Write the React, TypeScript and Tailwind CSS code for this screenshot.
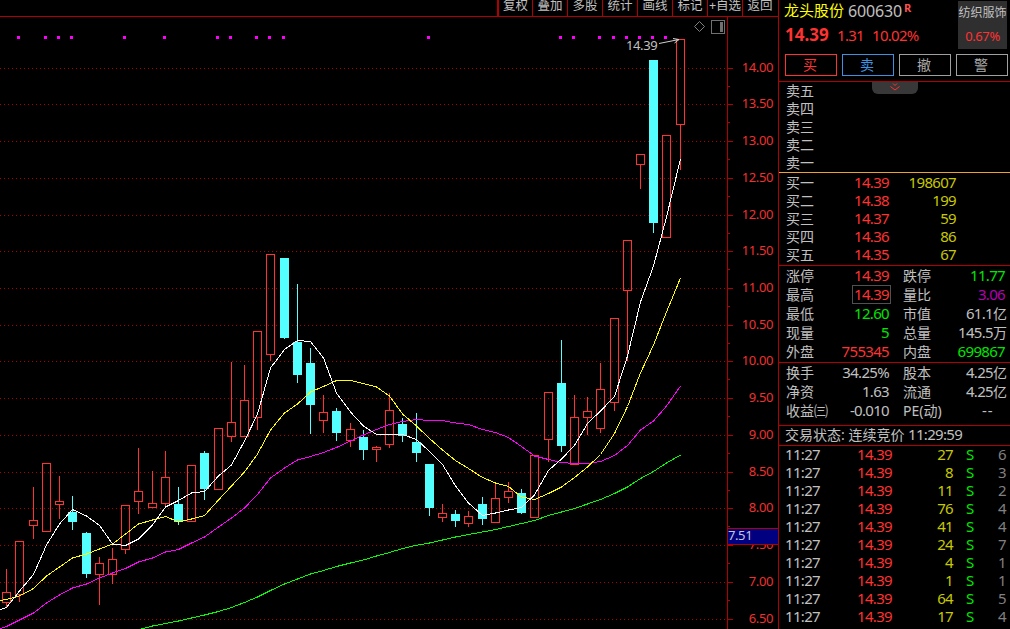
import React from 'react'

const RED = '#ff3232'
const CYAN = '#54ffff'
const LINE = '#b00000'

// [center x, high, body top, body bottom, low, is falling]
const candles = [
  [6, 569, 592, 602, 607, 0], [19, 541, 541, 594, 601, 0], [33, 487, 520, 525, 538, 0],
  [46, 463, 463, 531, 531, 0], [59, 476, 501, 504, 518, 0], [72, 496, 512, 521, 529, 1],
  [86, 532, 533, 573, 577, 1], [99, 557, 563, 574, 604, 0], [112, 548, 559, 574, 583, 0],
  [125, 505, 505, 549, 553, 0], [138, 448, 491, 501, 513, 0], [152, 471, 503, 507, 507, 0],
  [165, 451, 477, 503, 507, 0], [178, 487, 504, 521, 524, 1], [191, 465, 465, 521, 521, 0],
  [204, 451, 453, 488, 499, 1], [218, 428, 428, 489, 489, 0], [231, 362, 422, 436, 441, 0],
  [244, 365, 400, 436, 436, 0], [257, 331, 331, 417, 429, 0], [270, 254, 254, 354, 360, 0],
  [284, 258, 258, 337, 338, 1], [297, 284, 342, 374, 382, 1], [310, 348, 363, 404, 433, 1],
  [323, 395, 412, 420, 432, 0], [336, 408, 411, 432, 440, 1], [350, 423, 429, 440, 446, 0],
  [363, 430, 437, 449, 459, 1], [376, 446, 447, 449, 461, 0], [389, 393, 410, 444, 447, 0],
  [402, 418, 424, 435, 441, 1], [416, 413, 442, 452, 461, 1], [429, 464, 464, 507, 515, 1],
  [442, 504, 513, 517, 521, 0], [455, 510, 514, 520, 526, 1], [468, 511, 516, 523, 526, 0],
  [482, 497, 504, 518, 524, 1], [495, 483, 498, 522, 522, 0], [508, 482, 491, 497, 502, 0],
  [521, 489, 493, 512, 513, 1], [534, 455, 455, 517, 517, 0], [548, 392, 392, 439, 461, 0],
  [561, 340, 383, 445, 451, 1], [574, 395, 417, 464, 464, 0], [587, 397, 411, 417, 434, 0],
  [600, 363, 389, 428, 432, 0], [614, 318, 318, 402, 410, 0], [627, 240, 240, 290, 360, 0],
  [640, 154, 154, 164, 188, 0], [653, 60, 60, 222, 232, 1], [666, 135, 135, 237, 237, 0],
  [680, 39, 39, 124, 169, 0],
]

const averages = [
  { color: '#00ff00', points: '141,629 152,626 165,623.5 178,621 191,618 204,615 218,611.5 231,607.5 244,602.5 257,597 270,590.5 284,584 297,579 310,574 323,570.5 336,566.5 350,563 363,560 376,556 389,552.5 402,548.5 415,545.5 429,543 442,540 455,537 468,534.5 482,532 495,529.5 508,526.5 521,523.5 534,520.5 548,515.5 561,512 574,508.5 587,504 600,499.5 614,493.5 627,487 640,478.5 653,471.5 666,463 680,455' },
  { color: '#ff00ff', points: '0,628.5 6,626.5 19,620 33,613 46,603 59,595 72,588 86,584 99,578 112,573 125,568.5 138,562 152,558 165,552 178,549.5 191,543 204,537 218,527 231,518 244,508 257,494.5 270,478 284,468 297,460 310,456.5 323,452.5 336,447.5 350,441 363,435 376,429.5 389,424.5 402,421.5 416,419.5 429,420.5 442,420.5 455,423 468,424.5 482,429.5 495,432.5 508,437.5 521,446.5 534,456 548,459.5 561,462.5 574,463.5 587,463.5 600,461.5 614,455.5 627,445.5 640,430 653,421 666,406 680,386' },
  { color: '#ffff00', points: '0,600.5 6,599.5 19,596 33,588.5 46,576 59,567 72,558 86,554 99,549 112,544 125,534 138,524 152,520 165,516.5 178,522 191,519 204,515.5 218,500 231,486 244,472 257,454 270,430 284,413 297,404 310,392 323,386.5 336,380.5 350,380.5 363,383.5 376,387 389,396 402,414 416,426 429,438.5 442,450 455,460.5 468,468.5 482,477.5 495,483 508,486.5 521,497 534,499.5 548,493.5 561,487 574,477.5 587,467 600,454.5 614,433.5 627,406.5 640,373 653,345 666,312 680,278' },
  { color: '#ffffff', points: '0,609.5 6,607.5 19,591 33,574.5 46,545 59,524 72,509.5 86,516 99,525.5 112,544 125,545.5 138,539 152,525 165,507 178,500.5 191,493 204,491.5 218,476 231,465 244,441 257,414 270,368 284,349.5 297,340.5 310,341.5 323,358 336,393 350,412 363,426 376,434.5 389,434.5 402,434.5 416,439.5 429,451.5 442,464.5 455,486 468,503 482,515.5 495,513 508,510 521,507.5 534,495 548,470.5 561,459 574,445.5 587,423.5 600,411 614,396.5 627,356 640,302 653,266 666,217 680,159' },
]

const marks = [17, 44, 57, 70, 123, 163, 216, 229, 255, 268, 282, 427, 559, 572, 598, 612, 625, 638, 651, 664]

const gridRows: [number, string][] = [
  [68, '14.00'], [104, '13.50'], [141, '13.00'], [178, '12.50'], [215, '12.00'], [251, '11.50'],
  [288, '11.00'], [325, '10.50'], [361, '10.00'], [398, '9.50'], [435, '9.00'], [472, '8.50'],
  [508, '8.00'], [545, '7.50'], [582, '7.00'], [619, '6.50'],
]

const tools = ['复权', '叠加', '多股', '统计', '画线', '标记', '+自选', '返回']

const sells = ['卖五', '卖四', '卖三', '卖二', '卖一']

const buys = [
  ['买一', '14.39', '198607'],
  ['买二', '14.38', '199'],
  ['买三', '14.37', '59'],
  ['买四', '14.36', '86'],
  ['买五', '14.35', '67'],
]

const stats = [
  ['涨停', '14.39', 'text-[#ff3232]', '跌停', '11.77', '', 'text-[#00e600]'],
  ['最高', '14.39', 'text-[#ff3232]', '量比', '3.06', '', 'text-[#b400b4]'],
  ['最低', '12.60', 'text-[#00e600]', '市值', '61.1', '亿', ''],
  ['现量', '5', 'text-[#00e600]', '总量', '145.5', '万', ''],
  ['外盘', '755345', 'text-[#ff3232]', '内盘', '699867', '', 'text-[#00e600]'],
]

const funds = [
  ['换手', '34.25%', '', '股本', '4.25', '亿', ''],
  ['净资', '1.63', '', '流通', '4.25', '亿', ''],
  ['收益㈢', '-0.010', '', 'PE(动)', '--', '', ''],
]

const trades = [
  ['27', '6'], ['8', '3'], ['11', '2'], ['76', '4'], ['41', '4'],
  ['24', '7'], ['4', '1'], ['1', '1'], ['64', '5'], ['17', '4'],
]

function Num({ children, className = 'tracking-[-0.68px]' }: { children: React.ReactNode; className?: string }) {
  return <span className={`text-[15px] ${className}`}>{children}</span>
}

function Toolbar() {
  return (
    <div className="flex h-[17px] shrink-0 justify-end border-b border-[#b00000]">
      <div className="flex border-l-2 border-[#b00000]">
        {tools.map((t, i) => (
          <div
            key={t}
            className={`flex h-4 items-center justify-center whitespace-nowrap pb-[5px] text-[12.5px] leading-[11px] ${i === 0 ? 'w-[33px]' : 'w-[35px] border-l border-[#b00000]'}`}
          >
            {t}
          </div>
        ))}
        <div className="w-px" />
      </div>
    </div>
  )
}

function Chart() {
  return (
    <svg width="778" height="612" viewBox="0 17 778 612" className="block" shapeRendering="crispEdges">
      {gridRows.map(([y]) => (
        <line key={y} x1="0" x2="727" y1={y + 0.5} y2={y + 0.5} stroke={LINE} strokeDasharray="1 3" />
      ))}

      {candles.map(([x, high, top, bottom, low, down]) => (
        <g key={x} fill={down ? CYAN : RED}>
          <rect x={x} y={high} width="1" height={top - high} />
          <rect x={x} y={bottom} width="1" height={low - bottom + 1} />
          {down ? (
            <rect x={x - 4} y={top} width="9" height={bottom - top + 1} />
          ) : (
            <rect x={x - 3.5} y={top + 0.5} width="8" height={bottom - top} fill="none" stroke={RED} />
          )}
        </g>
      ))}

      {averages.map((a) => (
        <polyline key={a.color} points={a.points} transform="translate(0.5 0)" fill="none" stroke={a.color} />
      ))}

      {marks.map((x) => (
        <rect key={x} x={x} y="36" width="3" height="3" fill="#ff00ff" />
      ))}

      {/* high marker */}
      <text x="626" y="50" fontSize="13" letterSpacing="-0.4" fill="#c0c0c0">14.39</text>
      <path d="M659 43.5L679 39.5M673 38.5L679 39.5L674.5 43" fill="none" stroke="#d0d0d0" shapeRendering="auto" />

      {/* layout toggles */}
      <path d="M699.5 21.5L704.5 26.5L699.5 31.5L694.5 26.5Z" fill="none" stroke="#808080" shapeRendering="auto" />
      <rect x="711.5" y="20.5" width="13" height="13" fill="none" stroke="#707070" />
      <rect x="720" y="22" width="3" height="10" fill="#707070" />

      {/* price axis */}
      <rect x="727" y="17" width="1" height="612" fill={LINE} />
      {gridRows.map(([y, label], i) => (
        <g key={label}>
          <rect x="728" y={y} width="5" height="1" fill={LINE} />
          {i < gridRows.length - 1 && (
            <rect x="728" y={Math.floor((y + gridRows[i + 1][0]) / 2)} width="2" height="1" fill={LINE} />
          )}
          <text x="773" y={y + 4} fontSize="13" letterSpacing="-0.4" textAnchor="end" fill="#f03030">{label}</text>
        </g>
      ))}
      <rect x="728" y="528" width="50" height="17" fill={LINE} />
      <rect x="728" y="529" width="50" height="15" fill="#000080" />
      <text x="728" y="540" fontSize="13" letterSpacing="-0.4" fill="#c8c8d8">7.51</text>
    </svg>
  )
}

function Header() {
  return (
    <div className="flex h-[81px] shrink-0 flex-col">
      <div className="flex h-[54px] justify-between pl-[5px] pr-[3px]">
        <div>
          <div className="flex h-[21px] items-center whitespace-nowrap">
            <span className="w-16 text-[15px] text-[#ffff00]">龙头股份</span>
            <span className="text-[16px] tracking-[-0.15px]">600630</span>
            <span className="ml-[2px] pb-1 text-[11px] font-bold text-[#ff5050]">R</span>
          </div>
          <div className="flex h-[28px] items-center whitespace-nowrap pl-px text-[#ff3232]">
            <span className="w-[52px] text-[17px] font-bold">14.39</span>
            <span className="w-[35px] text-[15px] tracking-[-0.7px]">1.31</span>
            <span className="text-[15px] tracking-[-0.7px]">10.02%</span>
          </div>
        </div>
        <div className="mt-px flex h-12 w-[49px] flex-col items-center bg-[#2f2f30] text-[12px]">
          <div className="flex h-6 items-center whitespace-nowrap">纺织服饰</div>
          <div className="flex h-6 items-center text-[13px] tracking-[-0.4px] text-[#ff3232]">0.67%</div>
        </div>
      </div>
      <div className="flex gap-[5px] pl-[6px] text-[14px] text-[#a8a8a8]">
        <div className="flex h-[22px] w-[52px] items-center justify-center border border-[#ff3232] pb-0.5 pr-0.5 text-[#ff3232]">买</div>
        <div className="flex h-[22px] w-[52px] items-center justify-center border border-[#4090e0] pb-0.5 pr-0.5 text-[#4090e0]">卖</div>
        <div className="flex h-[22px] w-[52px] items-center justify-center border border-[#a0a0a0] pb-0.5 pr-0.5">撤</div>
        <div className="flex h-[22px] w-[52px] items-center justify-center border border-[#a0a0a0] pb-0.5 pr-0.5">警</div>
      </div>
    </div>
  )
}

function StatRow({ row, boxed = false }: { row: string[]; boxed?: boolean }) {
  const [label, value, color, label2, value2, unit, color2] = row
  return (
    <div className="flex h-[19px] items-center whitespace-nowrap">
      <span className="w-[50px]">{label}</span>
      <div className={`flex w-[53px] justify-end ${color}`}>
        <Num className={boxed ? 'mr-[-2px] border border-[#505050] pl-px pr-px leading-[17px] tracking-[-0.68px]' : 'tracking-[-0.68px]'}>{value}</Num>
      </div>
      <span className="ml-[14px] w-[50px]">{label2}</span>
      {value2 === '--' ? (
        <Num className="ml-[29px] tracking-[0.9px]">{value2}</Num>
      ) : (
        <div className={`flex items-center justify-end ${color2} ${unit ? 'w-[54px]' : 'w-[52px]'}`}>
          <Num>{value2}</Num>
          {unit}
        </div>
      )}
    </div>
  )
}

export default function App() {
  return (
    <div className="flex h-[629px] w-[1010px] overflow-hidden bg-black font-['Noto_Sans','Noto_Sans_CJK_SC',sans-serif] text-[#c0c0c0]">
      <div className="flex w-[778px] shrink-0 flex-col">
        <Toolbar />
        <Chart />
      </div>

      <div className="flex w-[232px] shrink-0 flex-col border-l border-[#b00000] text-[14px]">
        <Header />

        <div className="relative h-[91px] shrink-0 border-t border-[#b00000] pl-[7px]">
          {sells.map((s) => (
            <div key={s} className="flex h-[18px] items-center pb-0.5">{s}</div>
          ))}
          <div className="absolute left-[93px] top-0 flex h-3 w-[46px] justify-center rounded-b-md bg-[#383838] pr-px">
            <svg width="10" height="10" viewBox="0 0 10 10" fill="none" stroke="#ff3232">
              <path d="M3 1.5L5 3.5L7 1.5M0.5 4.5L5 8L9.5 4.5" />
            </svg>
          </div>
        </div>

        <div className="h-[93px] shrink-0 border-t border-[#f0a030] pl-[7px]">
          {buys.map(([label, price, vol]) => (
            <div key={label} className="flex h-[18px] items-center">
              <span className="w-[43px]">{label}</span>
              <Num className="w-[60px] text-right tracking-[-0.68px] text-[#ff3232]">{price}</Num>
              <Num className="w-[67px] text-right tracking-[-0.68px] text-[#c8c800]">{vol}</Num>
            </div>
          ))}
        </div>

        <div className="h-[97px] shrink-0 border-t border-[#b00000] pl-[7px]">
          {stats.map((row) => (
            <StatRow key={row[0]} row={row} boxed={row[0] === '最高'} />
          ))}
        </div>

        <div className="h-[63px] shrink-0 border-t border-[#b00000] pl-[7px]">
          {funds.map((row) => (
            <StatRow key={row[0]} row={row} />
          ))}
        </div>

        <div className="flex h-5 shrink-0 items-center whitespace-nowrap border-t border-[#b00000] pb-0.5 pl-[6px]">
          交易状态:&nbsp;连续竞价&nbsp;<Num>11:29:59</Num>
        </div>

        <div className="h-[184px] shrink-0 border-t border-[#b00000] pl-[6px]">
          {trades.map(([vol, count], i) => (
            <div key={i} className="flex h-[18px] items-center pb-0.5">
              <Num className="w-[44px] tracking-[-0.68px]">11:27</Num>
              <Num className="w-[63px] text-right tracking-[-0.68px] text-[#ff3232]">14.39</Num>
              <Num className="w-[61px] text-right tracking-[-0.68px] text-[#c8c800]">{vol}</Num>
              <Num className="ml-[13px] w-[12px] text-[#00e600]">S</Num>
              <Num className="w-[28px] text-right tracking-[-0.68px] text-[#808080]">{count}</Num>
            </div>
          ))}
        </div>
      </div>
    </div>
  )
}
